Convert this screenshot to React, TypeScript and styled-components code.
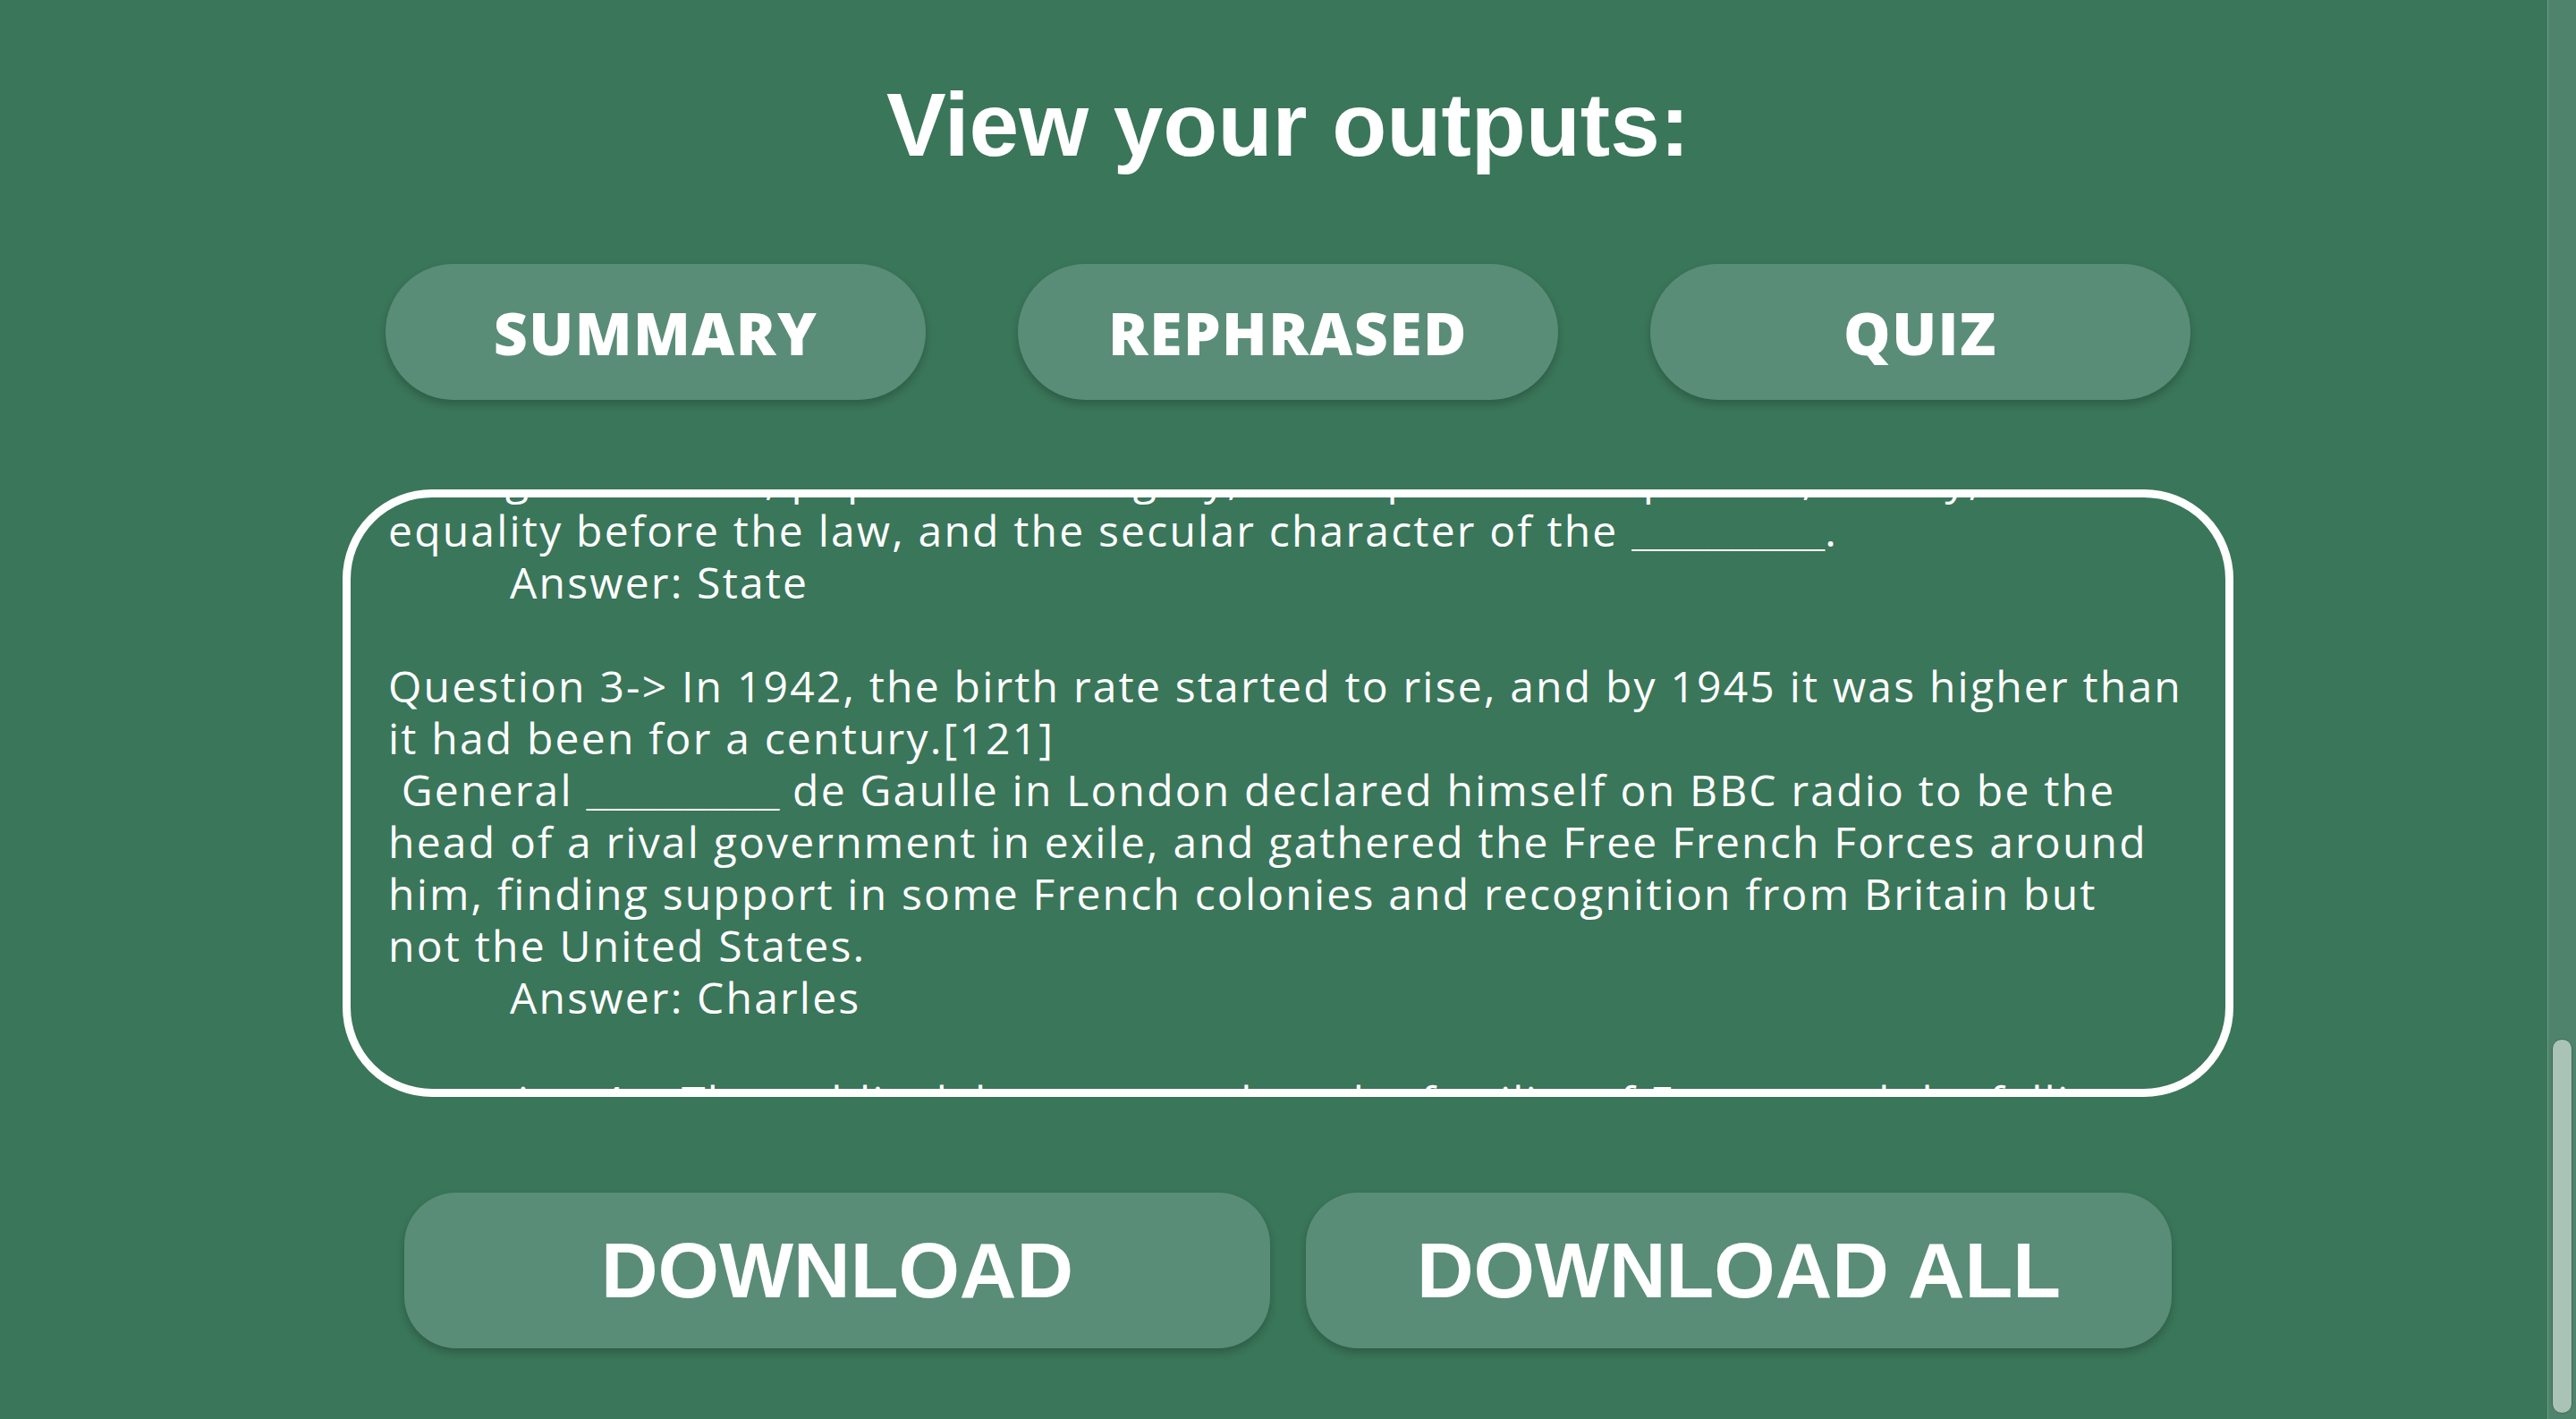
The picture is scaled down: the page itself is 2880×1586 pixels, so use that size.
import React, { useLayoutEffect, useRef } from "react";
import styled, { createGlobalStyle } from "styled-components";

const GlobalStyle = createGlobalStyle`
  html, body {
    margin: 0;
    padding: 0;
    height: 100%;
    overflow: hidden;
    background: #3a7659;
  }
  #root { height: 100%; }
  * { box-sizing: border-box; }
`;

const Shell = styled.div`
  display: flex;
  flex-direction: row;
  height: 100vh;
  background: #3a7659;
`;

const Main = styled.main`
  flex: 1;
  display: flex;
  flex-direction: column;
  align-items: center;
  padding: 82px 0 0 32px;
`;

const Title = styled.h1`
  margin: 0;
  font-family: "Liberation Sans", Arial, sans-serif;
  font-weight: 700;
  font-size: 100px;
  line-height: 115px;
  color: #ffffff;
`;

const TabRow = styled.div`
  display: flex;
  gap: 103px;
  margin-top: 98px;
`;

const TabButton = styled.button`
  width: 604px;
  height: 152px;
  border: none;
  border-radius: 76px;
  background: #598d77;
  color: #ffffff;
  font-family: "Open Sans", "Liberation Sans", sans-serif;
  font-weight: 800;
  font-size: 66px;
  letter-spacing: 1.5px;
  box-shadow: 0 5px 10px rgba(0, 0, 0, 0.22);
  display: flex;
  align-items: center;
  justify-content: center;
  padding: 0;
  cursor: pointer;
`;

const OutputBox = styled.div`
  margin-top: 100px;
  width: 2114px;
  height: 679px;
  border: 9px solid #ffffff;
  border-radius: 100px;
  overflow-y: auto;
  scrollbar-width: none;
  padding: 0 20px 40px 42px;
  &::-webkit-scrollbar { display: none; }
`;

const Line = styled.div`
  font-family: "Open Sans", "Noto Sans", sans-serif;
  font-size: 48px;
  line-height: 58px;
  height: 58px;
  letter-spacing: 2.2px;
  color: #ffffff;
  white-space: pre;
  tab-size: 136px;
`;

const Blank = styled.span`
  font-family: "Liberation Mono", monospace;
  font-size: 45px;
  line-height: 0;
  letter-spacing: 0;
`;

const ActionRow = styled.div`
  display: flex;
  gap: 40px;
  margin-top: 107px;
`;

const ActionButton = styled.button`
  width: 968px;
  height: 174px;
  border: none;
  border-radius: 58px;
  background: #598d77;
  color: #ffffff;
  font-family: "Liberation Sans", Arial, sans-serif;
  font-weight: 700;
  font-size: 88px;
  box-shadow: 0 5px 10px rgba(0, 0, 0, 0.22);
  display: flex;
  align-items: center;
  justify-content: center;
  padding: 0;
  cursor: pointer;
`;

const Track = styled.div`
  width: 32px;
  height: 100%;
  background: #4f836c;
  border-left: 1px solid rgba(255, 255, 255, 0.18);
  display: flex;
  flex-direction: column;
  justify-content: flex-end;
  padding: 0 4px 6px 4px;
`;

const Thumb = styled.div`
  height: 419px;
  background: #a9c3b7;
  border: 1px solid #3e6a55;
  border-radius: 11px;
`;

const BLANK = "________";

const lines = [
  "Question 1-> Although France was one of the victors of the war, the Vichy",
  "regime was ________ and replaced by a provisional government.",
  "\tAnswer: abolished",
  "",
  "Question 2-> The Constitution of 1946 restored the principles of the Republic:",
  "the rights of man, popular sovereignty, the separation of powers, liberty,",
  "equality before the law, and the secular character of the ________.",
  "\tAnswer: State",
  "",
  "Question 3-> In 1942, the birth rate started to rise, and by 1945 it was higher than",
  "it had been for a century.[121]",
  " General ________ de Gaulle in London declared himself on BBC radio to be the",
  "head of a rival government in exile, and gathered the Free French Forces around",
  "him, finding support in some French colonies and recognition from Britain but",
  "not the United States.",
  "\tAnswer: Charles",
  "",
  "Question 4-> The public debate centred on the fertility of France and the falling",
  "birth rate, which was blamed on ________ and the effects of the First World War.",
  "\tAnswer: individualism",
];

function renderLine(text: string) {
  const parts = text.split(BLANK);
  return parts.map((p, i) => (
    <React.Fragment key={i}>
      {p}
      {i < parts.length - 1 && <Blank>{BLANK}</Blank>}
    </React.Fragment>
  ));
}

export default function App() {
  const boxRef = useRef<HTMLDivElement>(null);

  useLayoutEffect(() => {
    if (boxRef.current) {
      boxRef.current.scrollTop = 5 * 58 + 50;
    }
  }, []);

  return (
    <>
      <GlobalStyle />
      <Shell>
        <Main>
          <Title>View your outputs:</Title>
          <TabRow>
            <TabButton>SUMMARY</TabButton>
            <TabButton>REPHRASED</TabButton>
            <TabButton>QUIZ</TabButton>
          </TabRow>
          <OutputBox ref={boxRef}>
            {lines.map((l, i) => (
              <Line key={i}>{renderLine(l)}</Line>
            ))}
          </OutputBox>
          <ActionRow>
            <ActionButton>DOWNLOAD</ActionButton>
            <ActionButton>DOWNLOAD ALL</ActionButton>
          </ActionRow>
        </Main>
        <Track>
          <Thumb />
        </Track>
      </Shell>
    </>
  );
}
